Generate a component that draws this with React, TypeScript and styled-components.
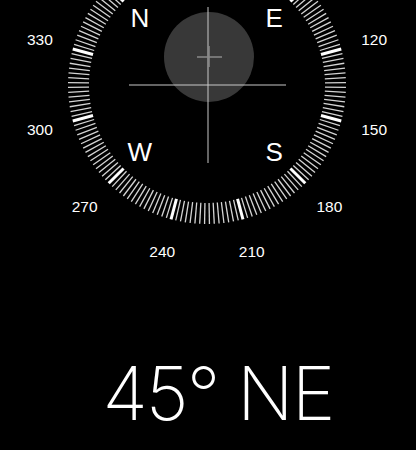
import React from "react";
import styled, { createGlobalStyle } from "styled-components";

const GlobalStyle = createGlobalStyle`
  html, body {
    margin: 0;
    padding: 0;
    background: #000;
  }
`;

const Screen = styled.div`
  width: 416px;
  height: 450px;
  overflow: hidden;
  background: #000;
  color: #fff;
  display: flex;
  flex-direction: column;
  font-family: "Liberation Sans", Arial, sans-serif;
`;

const Dial = styled.div`
  position: relative;
  width: 416px;
  height: 355px;
  flex-shrink: 0;
`;

const DialArt = styled.svg`
  display: block;
  width: 416px;
  height: 355px;
`;

const Label = styled.span<{ $size: number }>`
  position: absolute;
  transform: translate(-50%, -50%);
  font-size: ${(p) => p.$size}px;
  line-height: 1;
  color: #fff;
  white-space: nowrap;
`;

const Heading = styled.div`
  font-family: Inter, "Liberation Sans", sans-serif;
  font-weight: 200;
  font-size: 74px;
  line-height: 76px;
  text-align: center;
  padding-left: 20px;
  letter-spacing: -2px;
`;

const CX = 207;
const CY = 85;
const HEADING = 45;

const polar = (deg: number, r: number) => {
  const a = ((deg - HEADING) * Math.PI) / 180;
  return { x: CX + r * Math.sin(a), y: CY - r * Math.cos(a) };
};

const ticks = Array.from({ length: 180 }, (_, i) => i * 2);
const numbers = [30, 60, 90, 120, 150, 180, 210, 240, 270, 300, 330];
const cardinals = [
  { text: "N", deg: 0 },
  { text: "E", deg: 90 },
  { text: "S", deg: 180 },
  { text: "W", deg: 270 },
];

const Compass = () => {
  const level = { x: 209, y: 57 };
  return (
    <Dial>
      <DialArt viewBox="0 0 416 355">
        {ticks.map((d) => {
          const major = d % 30 === 0;
          const a = polar(d, 118);
          const b = polar(d, 139);
          return (
            <line
              key={d}
              x1={a.x}
              y1={a.y}
              x2={b.x}
              y2={b.y}
              stroke={major ? "#ffffff" : "#d4d4d4"}
              strokeWidth={major ? 3 : 1.3}
            />
          );
        })}
        <circle cx={level.x} cy={level.y} r={45} fill="#383838" />
        <line x1={CX + 1} y1={7} x2={CX + 1} y2={163} stroke="#c8c8c8" strokeWidth={1} />
        <line x1={129} y1={CY} x2={286} y2={CY} stroke="#c8c8c8" strokeWidth={1} />
        <line x1={197} y1={level.y} x2={222} y2={level.y} stroke="#8a8a8a" strokeWidth={1.5} />
        <line x1={level.x} y1={46} x2={level.x} y2={67} stroke="#8a8a8a" strokeWidth={1.5} />
      </DialArt>
      {cardinals.map((c) => {
        const p = polar(c.deg, 95);
        return (
          <Label key={c.text} $size={26} style={{ left: p.x, top: p.y }}>
            {c.text}
          </Label>
        );
      })}
      {numbers
        .map((n) => ({ n, p: polar(n, 173) }))
        .filter(({ p }) => p.y > 10)
        .map(({ n, p }) => (
          <Label key={n} $size={15.5} style={{ left: p.x, top: p.y }}>
            {n}
          </Label>
        ))}
    </Dial>
  );
};

const App = () => (
  <>
    <GlobalStyle />
    <Screen>
      <Compass />
      <Heading>45° NE</Heading>
    </Screen>
  </>
);

export default App;
